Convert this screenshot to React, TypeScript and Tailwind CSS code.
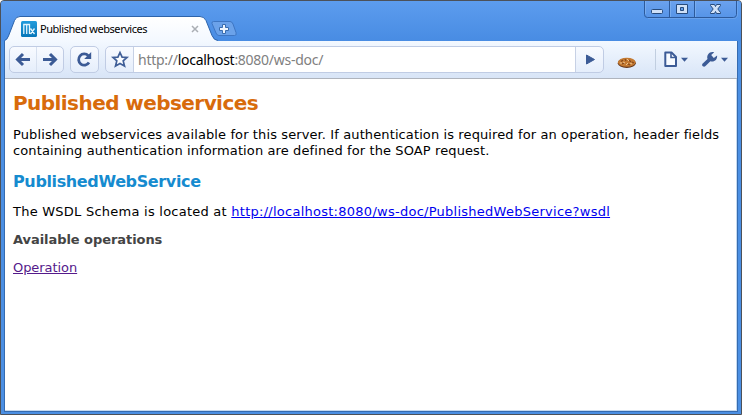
import React from "react";

function WindowButtons() {
  return (
    <svg className="absolute left-[642px] top-0" width="100" height="20" viewBox="0 0 100 20">
      <defs>
        <linearGradient id="wb" x1="0" y1="0" x2="0" y2="1">
          <stop offset="0" stopColor="#6ba2ee" />
          <stop offset="1" stopColor="#5694e7" />
        </linearGradient>
      </defs>
      <path d="M2.5 1V14.5Q2.5 17.5 5.5 17.5H91.5Q94.5 17.5 94.5 14.5V1" fill="url(#wb)" stroke="#2c5a9c" />
      <path d="M27.5 1V17M52.5 1V17" stroke="#2c5a9c" />
      <path d="M3.5 1V14M28.5 1V17M53.5 1V17" stroke="#82b3f2" strokeOpacity=".7" />
      <path d="M6 18.5H92Q95.5 18.5 95.5 14V1" fill="none" stroke="#78abef" strokeOpacity=".6" />
      <rect x="9.5" y="9.5" width="11" height="4" rx="1" fill="#cfe0f7" stroke="#274b7d" />
      <path fillRule="evenodd" d="M34.5 4.5H45.5V13.5H34.5ZM38.5 7.5V10.5H41.5V7.5Z" fill="#cfe0f7" stroke="#274b7d" />
      <path d="M68.5 4.5H72.5L73.5 6.5L74.5 4.5H78.5V5.5L75.8 9L78.5 12.5V13.5H74.5L73.5 11.5L72.5 13.5H68.5V12.5L71.2 9L68.5 5.5Z" fill="#cfe0f7" stroke="#274b7d" />
    </svg>
  );
}

function TabStrip() {
  return (
    <div className="relative h-[40px] w-full shrink-0">
      <svg className="absolute left-0 top-0 z-10" width="250" height="42" viewBox="0 0 250 42">
        <defs>
          <linearGradient id="tab" x1="0" y1="0" x2="0" y2="1">
            <stop offset="0" stopColor="#ffffff" />
            <stop offset="1" stopColor="#f3f8ff" />
          </linearGradient>
        </defs>
        <path
          d="M5 42V40.5Q7 40 8.5 36L14.5 20.5Q16 16.5 20 16.5H200Q204 16.5 206 20.5L212 35.5Q214 40.5 218 40.5V42Z"
          fill="url(#tab)"
        />
        <path
          d="M4.5 40.5Q7 40 8.5 36L14.5 20.5Q16 16.5 20 16.5H200Q204 16.5 206 20.5L212 35.5Q214 40.5 218 40.5"
          fill="none"
          stroke="#2d63aa"
        />
        <path d="M213.5 21.5H230Q232 21.5 233 24L236 32.5Q237 35.5 234.5 35.5H219Q217 35.5 216 33L212 23.5Q211.6 21.5 213.5 21.5Z" fill="#6ba2ea" stroke="#3e76c3" />
        <path d="M222.5 24.5H225.5V27.5H228.5V30.5H225.5V33.5H222.5V30.5H219.5V27.5H222.5Z" fill="#eef5fd" stroke="#396cae" />
      </svg>
      <div className="relative z-20 flex h-[25px] w-[202px] translate-y-[16px] items-center pl-[21px]">
        <svg width="16" height="16" viewBox="0 0 16 16" className="shrink-0">
          <defs>
            <linearGradient id="fav" x1="0" y1="0" x2="0" y2="1">
              <stop offset="0" stopColor="#219bdc" />
              <stop offset="1" stopColor="#0676b9" />
            </linearGradient>
          </defs>
          <rect width="16" height="16" rx="1.5" fill="url(#fav)" />
          <path d="M2.8 13V3.5H8.5V13M5.7 4V13M9.5 7.5L13.5 13M13.5 7.5L9.5 13" fill="none" stroke="#e2f4fd" strokeWidth="1.3" />
        </svg>
        <span className="ml-[3px] w-[108px] whitespace-nowrap font-['Noto_Sans',sans-serif] text-[11px] leading-[16px] tracking-[-0.45px] text-black">
          Published webservices
        </span>
        <svg width="8" height="8" viewBox="0 0 8 8" className="ml-auto mr-[3px] shrink-0">
          <path d="M1 1L7 7M7 1L1 7" stroke="#aaaeb4" strokeWidth="1.5" />
        </svg>
      </div>
      <WindowButtons />
    </div>
  );
}

const box = "flex h-[27px] shrink-0 items-center rounded-[5px] border border-[#c0cce4] bg-gradient-to-b from-[#f8faff] to-[#e5eefb]";

function Toolbar() {
  return (
    <div className="flex h-[38px] shrink-0 items-center border-b border-[#afb4bd] bg-gradient-to-b from-[#f3f8ff] to-[#d8e5f7] pl-[4px]">
      <div className={box + " w-[55px]"}>
        <svg width="53" height="25" viewBox="0 0 53 25">
          <path d="M26.5 0V25" stroke="#d7e0ef" />
          <g fill="none" stroke="#3c5b96" strokeWidth="3">
            <path d="M13 7L7.5 12.5L13 18M8 12.5H20" />
            <path d="M40 7L45.5 12.5L40 18M45 12.5H33" />
          </g>
        </svg>
      </div>
      <div className={box + " ml-[6px] w-[29px]"}>
        <svg width="27" height="25" viewBox="0 0 27 25">
          <path d="M17.3 8.7A5.6 5.6 0 1 0 18 15.5" fill="none" stroke="#3c5b96" strokeWidth="2.8" />
          <path d="M20.2 5V12H13.2Z" fill="#3c5b96" />
        </svg>
      </div>
      <div className={box + " ml-[6px] w-[499px] overflow-hidden"}>
        <svg width="27" height="25" viewBox="0 0 27 25" className="shrink-0">
          <path d="M14 5.5L16.1 10.1L21 10.5L17.2 13.9L18.5 19L14 16.4L9.5 19L10.8 13.9L7 10.5L11.9 10.1Z" fill="#fbfdff" stroke="#405f98" strokeWidth="1.7" />
        </svg>
        <div className="flex h-full w-[443px] items-center border-x border-[#c7d1e5] bg-white pl-[4px]">
          <span className="whitespace-nowrap font-['Noto_Sans',sans-serif] text-[14px] leading-[20px] tracking-[-0.27px] text-[#808080]">
            http://<span className="text-black">localhost</span>:8080/ws-doc/
          </span>
        </div>
        <svg width="27" height="25" viewBox="0 0 27 25" className="shrink-0">
          <path d="M10.5 8L18.5 12.5L10.5 17Z" fill="#3c5b96" stroke="#3c5b96" strokeLinejoin="round" />
        </svg>
      </div>
      <svg width="20" height="13" viewBox="0 0 20 13" className="ml-[13px] mt-[6px] shrink-0">
        <ellipse cx="9.8" cy="7.2" rx="9" ry="4.8" fill="#63351a" />
        <ellipse cx="9.8" cy="6.2" rx="8.8" ry="4.5" fill="#c47a32" />
        <path d="M4 5.5L6 4M8 3L9 5M12 4L14 6M5 8L7 7M11 8L13 9M15 6L17 7" stroke="#84481d" strokeWidth="1.2" />
        <path d="M6 6L8 7M10 3L12 5M9 9L11 7M13 7L15 8M3 7H5" stroke="#ecc391" strokeWidth="1" />
      </svg>
      <div className="ml-[18px] h-[21px] w-px bg-[#c1cee0]" />
      <svg width="80" height="25" viewBox="0 0 80 25" className="shrink-0">
        <path d="M9.3 5.5H15.5L20 10V19H9.3Z" fill="#f8fbff" stroke="#3c5b96" strokeWidth="2" strokeLinejoin="round" />
        <path d="M15 5.5V10.5H20" fill="none" stroke="#3c5b96" strokeWidth="1.6" />
        <path d="M25 10.7H32L28.5 14.7Z M65 10.7H72L68.5 14.7Z" fill="#3c5b96" />
        <path d="M47 16.2L51.5 12C50.2 7.7 54 3.8 58.2 5.3L55.2 8.1L57.8 11L61.1 8.5C61.5 12.8 58.2 15.4 54.4 14.3L49.5 19.1C47.4 20.8 44.7 18.1 47 16.2Z" fill="#3c5b96" />
      </svg>
    </div>
  );
}

export default function App() {
  return (
    <div className="relative flex h-[415px] w-[742px] flex-col overflow-hidden rounded-t-[4px] border border-[#4c5159] bg-[#4b8fe3]">
      <div className="absolute inset-x-0 top-0 h-[40px] bg-gradient-to-b from-[#5c9cee] to-[#488ce3]" />
      <div className="-ml-px -mt-px">
        <TabStrip />
      </div>
      <div className="mb-[2px] ml-[3px] mr-[3px] flex grow flex-col border border-[#356bb0]">
        <Toolbar />
        <main className="grow border-b border-r border-[#c5d9ef] bg-white pl-[8px] font-['DejaVu_Sans',Verdana,sans-serif] text-[13px] leading-[16px] text-black">
          <h1 className="mt-[12px] whitespace-nowrap text-[20px] font-bold leading-[24px] tracking-[-0.56px] text-[#d86b0b]">
            Published webservices
          </h1>
          <p className="mt-[12px] whitespace-nowrap">
            <span className="tracking-[0.11px]">Published webservices available for this server. If authentication is required for an operation, header fields</span>
            <br />
            <span className="tracking-[0.11px]">containing authentication information are defined for the SOAP request.</span>
          </p>
          <h2 className="mt-[13px] whitespace-nowrap text-[16px] font-bold leading-[20px] tracking-[-0.37px] text-[#168bcf]">PublishedWebService</h2>
          <p className="mt-[12px] whitespace-nowrap tracking-[0.24px]">
            The WSDL Schema is located at{" "}
            <a href="#" className="tracking-[0.26px] text-[#0000ee] underline">http://localhost:8080/ws-doc/PublishedWebService?wsdl</a>
          </p>
          <h3 className="mt-[12px] whitespace-nowrap font-bold tracking-[-0.06px] text-[#444444]">Available operations</h3>
          <p className="mt-[12px]">
            <a href="#" className="tracking-[-0.06px] text-[#551a8b] underline">Operation</a>
          </p>
        </main>
      </div>
    </div>
  );
}
